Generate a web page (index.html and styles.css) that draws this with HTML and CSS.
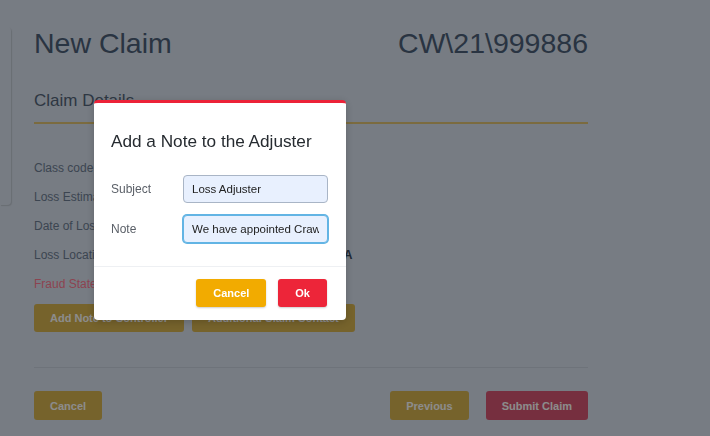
FILE: index.html
```html
<!DOCTYPE html>
<html lang="en">
<head>
<meta charset="utf-8">
<title>New Claim</title>
<link rel="stylesheet" href="styles.css">
</head>
<body>
<div class="page">
  <div class="side-card"></div>
  <main class="claim">
    <header class="claim-head">
      <h1 class="claim-title">New Claim</h1>
      <div class="claim-ref">CW\21\999886</div>
    </header>
    <h2 class="section-title">Claim Details</h2>
    <dl class="details">
      <dt>Class code</dt><dd>Property</dd>
      <dt>Loss Estimate</dt><dd>£250,000</dd>
      <dt>Date of Loss</dt><dd>12/03/2021</dd>
      <dt>Loss Location</dt><dd>Houston, Texas, USA</dd>
      <dt class="alert">Fraud State</dt><dd>No</dd>
    </dl>
    <div class="actions">
      <button class="btn btn-gold">Add Note to Controller</button>
      <button class="btn btn-gold">Additional Claim Contact</button>
    </div>
    <hr class="divider">
    <div class="nav">
      <button class="btn btn-gold btn-tall">Cancel</button>
      <div class="nav-right">
        <button class="btn btn-gold btn-tall">Previous</button>
        <button class="btn btn-rose btn-tall">Submit Claim</button>
      </div>
    </div>
  </main>
</div>

<div class="backdrop">
  <div class="modal">
    <div class="modal-body">
      <h3 class="modal-title">Add a Note to the Adjuster</h3>
      <form class="note-form">
        <label for="subject">Subject</label>
        <input id="subject" class="field" type="text" value="Loss Adjuster">
        <label for="note">Note</label>
        <input id="note" class="field field-focus" type="text" value="We have appointed Crawford &amp; Company">
      </form>
    </div>
    <div class="modal-footer">
      <button class="btn btn-warning">Cancel</button>
      <button class="btn btn-danger">Ok</button>
    </div>
  </div>
</div>
</body>
</html>
```

FILE: styles.css
```css
html, body {
  margin: 0;
  padding: 0;
}

body {
  width: 710px;
  height: 436px;
  overflow: hidden;
  background: #d9e2ee;
  font-family: "Liberation Sans", Arial, sans-serif;
}

.page {
  display: flex;
  align-items: flex-start;
}

.side-card {
  flex: none;
  width: 11px;
  height: 178px;
  margin-top: 27px;
  border-radius: 0 4px 4px 0;
  box-shadow: 1px 1px 1px rgba(0, 0, 0, 0.12);
}

.claim {
  width: 554px;
  margin-left: 23px;
  padding-top: 27px;
}

.claim-head {
  display: flex;
  justify-content: space-between;
  font-size: 28.5px;
  line-height: 32px;
  color: #4c5f78;
}

.claim-title {
  margin: 0;
  font-size: inherit;
  font-weight: normal;
}

.section-title {
  margin: 32px 0 0;
  padding-bottom: 11px;
  border-bottom: 2px solid #e0c373;
  font-size: 17px;
  line-height: 20px;
  font-weight: normal;
  color: #54657a;
}

.details {
  display: grid;
  grid-template-columns: 198px auto;
  grid-auto-rows: 29px;
  align-items: center;
  margin: 29px 0 0;
}

.details dt {
  font-size: 12px;
  color: #6e7e94;
}

.details dt.alert {
  color: #ff7b93;
}

.details dd {
  margin: 0;
  font-size: 12px;
  font-weight: bold;
  color: #38495d;
}

.actions {
  display: flex;
  gap: 8px;
  margin-top: 6px;
}

.divider {
  height: 0;
  margin: 35px 0 0;
  border: none;
  border-top: 1px solid #c8d1de;
}

.nav {
  display: flex;
  justify-content: space-between;
  margin-top: 23px;
}

.nav-right {
  display: flex;
  gap: 17px;
}

.btn {
  height: 28px;
  padding: 0 16px;
  border: none;
  border-radius: 3px;
  font-family: "Liberation Sans", Arial, sans-serif;
  font-size: 11px;
  font-weight: bold;
  color: #ffffff;
}

.btn-tall {
  height: 29px;
}

.btn-gold {
  background: #d7b450;
}

.btn-rose {
  background: #d75773;
}

.backdrop {
  position: fixed;
  inset: 0;
  background: rgba(0, 0, 0, 0.45);
}

.modal {
  position: absolute;
  left: 94px;
  top: 100px;
  width: 252px;
  box-sizing: border-box;
  background: #ffffff;
  border-top: 3px solid #ec2238;
  border-radius: 4px;
  box-shadow: 0 2px 8px rgba(0, 0, 0, 0.2);
}

.modal-body {
  padding: 27px 18px 23px 17px;
}

.modal-title {
  margin: 0;
  font-size: 17.2px;
  line-height: 22px;
  font-weight: normal;
  color: #262b30;
}

.note-form {
  display: grid;
  grid-template-columns: 72px 1fr;
  row-gap: 12px;
  align-items: center;
  margin-top: 23px;
}

.note-form label {
  font-size: 12px;
  color: #5b6068;
}

.field {
  width: 145px;
  height: 28px;
  box-sizing: border-box;
  margin: 0;
  padding: 0 8px;
  border: 1px solid #a9b5c6;
  border-radius: 4px;
  background: #e8f0fe;
  font-family: "Liberation Sans", Arial, sans-serif;
  font-size: 11.5px;
  color: #222222;
  outline: none;
}

.field-focus {
  border-color: #62b4e4;
  box-shadow: 0 0 0 1px #62b4e4;
}

.modal-footer {
  display: flex;
  justify-content: flex-end;
  gap: 12px;
  padding: 12px 19px 13px;
  border-top: 1px solid #eef0f3;
}

.modal-footer .btn {
  box-shadow: 0 1px 2px rgba(0, 0, 0, 0.2);
}

.btn-warning {
  background: #f2ab00;
  padding: 0 17px;
}

.btn-danger {
  background: #ed2539;
  padding: 0 17px;
}
```
